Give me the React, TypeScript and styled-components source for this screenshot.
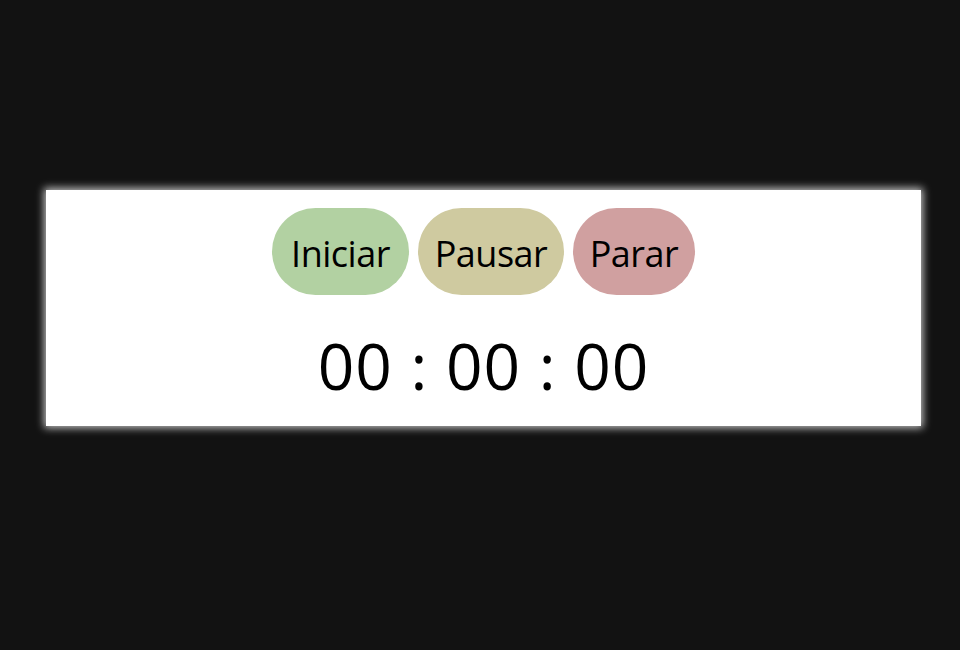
import styled, { createGlobalStyle } from "styled-components";

const GlobalStyle = createGlobalStyle`
  html, body {
    margin: 0;
    padding: 0;
    background: #121212;
  }
  body {
    font-family: "Open Sans", "Noto Sans", sans-serif;
  }
`;

const Page = styled.div`
  width: 960px;
  height: 650px;
  padding: 190px 0 0 46px;
  box-sizing: border-box;
`;

const Card = styled.div`
  width: 875px;
  height: 236px;
  box-sizing: border-box;
  background: #ffffff;
  box-shadow: 0 0 8px 2px rgba(255, 255, 255, 0.75);
  display: flex;
  flex-direction: column;
  align-items: center;
  padding-top: 18px;
`;

const Controls = styled.div`
  display: flex;
  gap: 9px;
`;

const Button = styled.button<{ $bg: string; $w: number }>`
  width: ${(p) => p.$w}px;
  height: 87px;
  border: none;
  border-radius: 44px;
  background: ${(p) => p.$bg};
  color: #000;
  font-family: "Open Sans", "Noto Sans", sans-serif;
  font-size: 36px;
  letter-spacing: -0.5px;
  padding: 3px 0 0;
  cursor: pointer;
`;

const Timer = styled.div`
  margin-top: 39px;
  font-size: 64px;
  font-weight: 500;
  line-height: 1;
  color: #000;
  letter-spacing: 1px;
`;

export default function App() {
  return (
    <>
      <GlobalStyle />
      <Page>
        <Card>
          <Controls>
            <Button $bg="#b2d1a2" $w={137}>Iniciar</Button>
            <Button $bg="#cfcaa0" $w={146}>Pausar</Button>
            <Button $bg="#d0a0a0" $w={122}>Parar</Button>
          </Controls>
          <Timer>00 : 00 : 00</Timer>
        </Card>
      </Page>
    </>
  );
}
